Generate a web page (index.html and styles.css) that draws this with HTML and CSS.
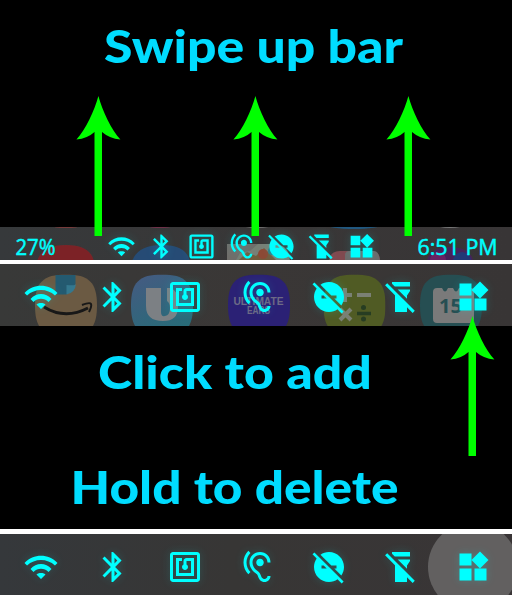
FILE: index.html
```html
<!DOCTYPE html>
<html lang="en">
<head>
<meta charset="utf-8">
<title>Swipe up bar</title>
<link rel="stylesheet" href="styles.css">
</head>
<body>
<svg class="defs" width="0" height="0">
  <defs>
    <symbol id="wifi" viewBox="0 0 24 24"><path d="M1 9.3l1.7 1.7c5.1-4.9 13.5-4.9 18.6 0L23 9.3C16.93 2.83 7.08 2.83 1 9.300zm8 7.700l3 3 3-3c-.5-1.400-5.500-1.400-6 0zm-4-3.700l2 2c2.760-2.760 7.240-2.760 10 0l2-2C15.140 8.940 8.870 8.940 5 13.300z"/></symbol>
    <symbol id="bluetooth" viewBox="0 0 24 24"><path d="M17.710 7.710L12 2h-1v7.590L6.410 5 5 6.410 10.590 12 5 17.590 6.410 19 11 14.410V22h1l5.710-5.710-4.300-4.290 4.300-4.290zM13 5.830l1.880 1.880L13 9.590V5.830zm1.880 10.460L13 18.170v-3.760l1.880 1.880z"/></symbol>
    <symbol id="nfc" viewBox="0 0 24 24"><path d="M20 2H4c-1.100 0-2 .900-2 2v16c0 1.100.900 2 2 2h16c1.100 0 2-.900 2-2V4c0-1.100-.900-2-2-2zm0 18H4V4h16v16zM18 6h-5c-1.100 0-2 .900-2 2v2.280c-.600.350-1 .980-1 1.720 0 1.100.900 2 2 2s2-.900 2-2c0-.740-.400-1.380-1-1.720V8h3v8H8V8h2V6H6v12h12V6z"/></symbol>
    <symbol id="hearing" viewBox="0 0 24 24"><path d="M17 20c-.290 0-.560-.060-.760-.150-.710-.370-1.210-.880-1.710-2.380-.510-1.560-1.470-2.290-2.390-3-.790-.610-1.610-1.240-2.320-2.530C9.290 10.980 9 9.930 9 9c0-2.800 2.200-5 5-5s5 2.200 5 5h2c0-3.930-3.070-7-7-7S7 5.070 7 9c0 1.260.380 2.650 1.070 3.900.910 1.650 1.980 2.480 2.850 3.150.810.620 1.390 1.070 1.710 2.050.600 1.820 1.370 2.840 2.730 3.550.510.230 1.070.350 1.640.350 2.210 0 4-1.790 4-4h-2c0 1.100-.900 2-2 2zM7.640 2.640L6.220 1.220C4.230 3.210 3 5.960 3 9s1.230 5.790 3.220 7.780l1.410-1.410C6.010 13.740 5 11.490 5 9s1.010-4.740 2.640-6.360zM11.500 9c0 1.380 1.120 2.500 2.500 2.500s2.500-1.120 2.500-2.500-1.120-2.500-2.500-2.500-2.500 1.120-2.500 2.500z"/></symbol>
    <symbol id="disturb" viewBox="0 0 24 24"><path d="M17 11v2h-1.460l4.680 4.680C21.340 16.070 22 14.110 22 12c0-5.520-4.480-10-10-10-2.110 0-4.070.660-5.680 1.780L13.540 11H17zM2.270 2.270L1 3.540l2.780 2.780C2.660 7.930 2 9.890 2 12c0 5.520 4.480 10 10 10 2.110 0 4.070-.660 5.680-1.780L20.460 23l1.270-1.270L2.270 2.270zM7 13v-2h1.460l2 2H7z"/></symbol>
    <symbol id="flashlight" viewBox="0 0 24 24"><path d="M18 5V2H6v1.170L7.830 5zM16 11l2-3V7H9.830L16 13.170zM2.810 2.810L1.390 4.220 8 10.830V22h8v-3.170l3.780 3.780 1.410-1.410z"/></symbol>
    <symbol id="widgets" viewBox="0 0 24 24"><path d="M13 13v8h8v-8h-8zM3 21h8v-8H3v8zM3 3v8h8V3H3zm13.660-1.310L11 7.340 16.660 13l5.660-5.660-5.660-5.650z"/></symbol>
    <symbol id="arrow" viewBox="0 0 46 142"><path d="M23.400 1C27.400 16 36.400 35 45.400 44.500Q34.400 43.500 27 37V141H19.500V37Q12.400 43.500 1.400 44.500C10.400 35 19.400 16 23.400 1z"/></symbol>
    <symbol id="tile" viewBox="0 0 62 62"><path d="M31 0C54 0 62 8 62 31S54 62 31 62 0 54 0 31 8 0 31 0z"/></symbol>
    <linearGradient id="bixby" x1="0" y1="0" x2="0.5" y2="1"><stop offset="0" stop-color="#465a82"/><stop offset="1" stop-color="#286b78"/></linearGradient>
    <filter id="soft" x="-20%" y="-20%" width="140%" height="140%"><feGaussianBlur stdDeviation=".6"/></filter>
  </defs>
</svg>

<main class="guide">
  <section class="panel panel-swipe">
    <h1 class="caption"><svg width="512" height="227"><text x="104" y="62.500" textLength="299" lengthAdjust="spacingAndGlyphs">Swipe up bar</text></svg></h1>
    <div class="bar bar-small">
      <svg class="backdrop" width="512" height="33">
        <g filter="url(#soft)">
          <ellipse cx="66" cy="-1" rx="14" ry="2" fill="#773b3b"/><ellipse cx="160" cy="-1" rx="12" ry="2" fill="#70304a"/><ellipse cx="354" cy="-2" rx="27" ry="4" fill="#205980"/><ellipse cx="450" cy="-2" rx="14" ry="3" fill="#777"/><ellipse cx="257" cy="-2" rx="16" ry="3" fill="#777"/>
          <path d="M37 34Q42 18 66 18T94 34z" fill="#7b2428"/>
          <path d="M132 34Q138 18 162 18T190 34z" fill="#254c75"/>
          <path d="M227 34V23Q227 17 235 17H273Q289 17 290 34z" fill="#788076"/>
          <path d="M227 17h31l-8 7-10 2-4 7h-9z" fill="#6f6e6a"/><path d="M239 33l8-8 9 4 8-8 12 12z" fill="#735c3c"/><circle cx="263" cy="27" r="5" fill="#8c4a36"/><circle cx="272" cy="24" r="4" fill="#327c85"/><circle cx="282" cy="28" r="4" fill="#8c7941"/>
          <path d="M329 34Q330 24 340 24H371Q380 24 380 34z" fill="#814a50"/><path d="M345 34V28q0-4 5-4h24q5 0 6 10z" fill="#6d6a6a"/>
          <ellipse cx="450" cy="34" rx="23" ry="14" fill="#452458"/><ellipse cx="438" cy="33" rx="8" ry="8" fill="#672464"/><ellipse cx="462" cy="34" rx="9" ry="9" fill="#243776"/>
        </g>
      </svg>
      <svg class="status" width="60" height="33"><text x="15.500" y="28" textLength="40" lengthAdjust="spacingAndGlyphs">27%</text></svg>
      <div class="icons icons-small">
        <svg><use href="#wifi"/></svg><svg><use href="#bluetooth"/></svg><svg><use href="#nfc"/></svg><svg><use href="#hearing"/></svg><svg><use href="#disturb"/></svg><svg><use href="#flashlight"/></svg><svg><use href="#widgets"/></svg>
      </div>
      <svg class="status" width="100" height="33"><text x="50.500" y="28" text-anchor="middle" transform="translate(-5 0)" textLength="80" lengthAdjust="spacingAndGlyphs">6:51 PM</text></svg>
    </div>
    <svg class="arrow arrow-left"><use href="#arrow"/></svg>
    <svg class="arrow arrow-middle"><use href="#arrow"/></svg>
    <svg class="arrow arrow-right"><use href="#arrow"/></svg>
  </section>

  <section class="panel panel-edit">
    <div class="bar bar-large">
      <svg class="backdrop" width="512" height="62">
        <use href="#tile" x="35" y="10.500" width="62" height="62" fill="#6b5a43"/>
        <path d="M55.500 11h20v9l-9 10.500h-11z" fill="#245a70"/><path d="M66.500 21q9 1 9.500-1-1 9-9.500 10.500z" fill="#34788e"/>
        <path d="M44 43Q65 56 88 44" fill="none" stroke="#181818" stroke-width="3"/><path d="M82 41q8-3 9-1t-2 8" fill="none" stroke="#181818" stroke-width="2"/>
        <use href="#tile" x="131" y="10.500" width="62" height="62" fill="url(#bixby)"/>
        <path d="M146 24h15v24q0 5 4 4 5-1 5-8 0-5-3-7V24h3q8 2 8 14v5q0 14-15 14-17 0-17-15z" fill="#7c8084"/>
        <use href="#tile" x="228" y="10.500" width="62" height="62" fill="#2b2175"/>
        <text class="brand" x="233.500" y="41" textLength="50" lengthAdjust="spacingAndGlyphs">ULTIMATE</text><text class="brand" x="247" y="50" textLength="23" lengthAdjust="spacingAndGlyphs">EARS</text>
        <use href="#tile" x="323.500" y="10.500" width="62" height="62" fill="#505b24"/>
        <path d="M338 31h14M345 24v14M357 31h14M340 45l11 11M351 45l-11 11" fill="none" stroke="#7b8074" stroke-width="4"/><path d="M357 49.500h14" stroke="#273d22" stroke-width="3.500"/><circle cx="363.500" cy="43.500" r="2.500" fill="#273d22"/><circle cx="363.500" cy="55" r="2.500" fill="#273d22"/>
        <use href="#tile" x="420" y="10.500" width="62" height="62" fill="#264e52"/>
        <path d="M437 24h5q3 7 6 0h5q3 7 6 0h5q3 7 6 0h1q3 0 3 4v27q0 4-4 4h-33q-4 0-4-4V28q0-4 4-4z" fill="#7a7a7a"/>
        <text class="date" x="439" y="49" textLength="23">15</text>
      </svg>
      <div class="icons">
        <svg><use href="#wifi"/></svg><svg><use href="#bluetooth"/></svg><svg><use href="#nfc"/></svg><svg><use href="#hearing"/></svg><svg><use href="#disturb"/></svg><svg><use href="#flashlight"/></svg><svg><use href="#widgets"/></svg>
      </div>
    </div>
    <div class="caption"><svg width="512" height="203"><text x="98" y="62.500" textLength="274" lengthAdjust="spacingAndGlyphs">Click to add</text><text x="70.500" y="177.500" textLength="328" lengthAdjust="spacingAndGlyphs">Hold to delete</text></svg></div>
    <svg class="arrow arrow-add"><use href="#arrow"/></svg>
  </section>

  <section class="panel panel-hold">
    <div class="bar bar-large bar-hold">
      <span class="press"></span>
      <div class="icons">
        <svg><use href="#wifi"/></svg><svg><use href="#bluetooth"/></svg><svg><use href="#nfc"/></svg><svg><use href="#hearing"/></svg><svg><use href="#disturb"/></svg><svg><use href="#flashlight"/></svg><svg><use href="#widgets"/></svg>
      </div>
    </div>
  </section>
</main>
</body>
</html>
```
FILE: styles.css
```css
body { margin: 0; background: #fff; overflow: hidden; }
svg { display: block; }
.defs { position: absolute; }
.guide { width: 512px; height: 595px; display: flex; flex-direction: column; }
.panel { position: relative; background: #000; }
.panel-swipe { height: 260px; margin-bottom: 4px; }
.panel-edit { height: 265px; margin-bottom: 5px; }
.panel-hold { height: 61px; }
.caption { margin: 0; fill: #00dcff; font: 900 45px Lato, sans-serif; }
.bar { position: relative; display: flex; overflow: hidden; background: linear-gradient(90deg, #36393b, #393737 50%, #383536); }
.bar-small { height: 33px; }
.bar-large { height: 62px; background: linear-gradient(90deg, #383938, #3a3736 50%, #383535); }
.bar-hold { height: 61px; background: linear-gradient(90deg, #35383b, #373635 45%, #393536); }
.backdrop { position: absolute; left: 0; top: 0; }
.status { position: relative; fill: #0ff; stroke: #0ff; stroke-width: .5px; stroke-linejoin: round; font: 500 22px "Open Sans", sans-serif; }
.icons { position: relative; display: flex; gap: 36px; padding: 15px 0 0 23px; fill: #0ff; filter: drop-shadow(0 0 4px rgba(0, 255, 255, .18)); }
.icons svg { width: 36px; height: 36px; flex: none; }
.icons-small { gap: 11px; width: 305px; padding: 5px 0 0 47px; }
.icons-small svg { width: 29px; height: 29px; }
.arrow { position: absolute; width: 46px; height: 142px; fill: #0f0; }
.arrow-left { left: 75px; top: 95px; }
.arrow-middle { left: 232px; top: 95px; }
.arrow-right { left: 385px; top: 95px; }
.arrow-add { left: 449px; top: 51px; }
.brand { fill: #6d6a86; font: 700 10px "Liberation Sans", sans-serif; }
.date { fill: #264e52; font: 700 20px "Open Sans", sans-serif; }
.press { position: absolute; left: 428px; top: -12px; width: 90px; height: 90px; border-radius: 50%; background: #626060; }
```
